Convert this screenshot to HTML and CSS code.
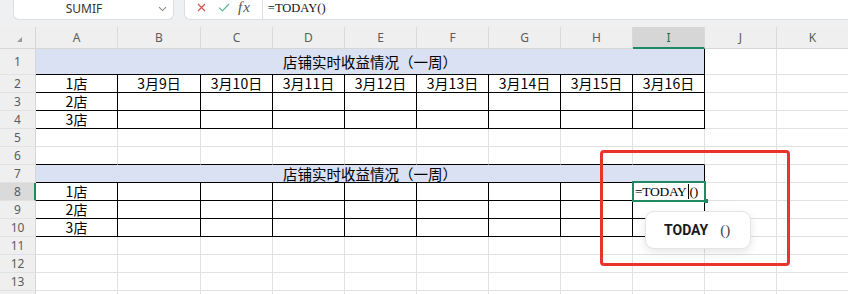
FILE: index.html
```html
<!DOCTYPE html>
<html lang="zh-CN">
<head>
<meta charset="utf-8">
<title>Sheet</title>
<link rel="stylesheet" href="styles.css">
</head>
<body>
<div class="topbar">
  <div class="namebox">
    <span class="nb-text">SUMIF</span>
    <svg class="chev" width="9" height="6" viewBox="0 0 9 6"><path d="M1 1.2 L4.5 4.6 L8 1.2" fill="none" stroke="#8a8a8a" stroke-width="1.1"/></svg>
  </div>
  <div class="fbox">
    <svg class="ic-x" width="9" height="9" viewBox="0 0 9 9"><path d="M1 1 L8 8 M8 1 L1 8" stroke="#d6534d" stroke-width="1.2" fill="none"/></svg>
    <svg class="ic-ok" width="12" height="9" viewBox="0 0 12 9"><path d="M1 4.6 L4.4 8 L11 1" stroke="#5db792" stroke-width="1.2" fill="none"/></svg>
    <span class="fx">fx</span>
    <span class="fdiv"></span>
    <span class="ftext">=TODAY()</span>
  </div>
</div>
<div class="sheet">
  <div class="corner"><svg width="5" height="5" viewBox="0 0 5 5"><polygon points="5,0 5,5 0,5" fill="#9c9c9c"/></svg></div>
  <div class="ch">A</div><div class="ch">B</div><div class="ch">C</div><div class="ch">D</div><div class="ch">E</div><div class="ch">F</div><div class="ch">G</div><div class="ch">H</div><div class="ch sel">I</div><div class="ch">J</div><div class="ch">K</div>

  <div class="rh tall">1</div><div class="cell title tall">店铺实时收益情况（一周）</div><div class="cell"></div><div class="cell"></div>

  <div class="rh">2</div><div class="cell b">1店</div><div class="cell b">3月9日</div><div class="cell b">3月10日</div><div class="cell b">3月11日</div><div class="cell b">3月12日</div><div class="cell b">3月13日</div><div class="cell b">3月14日</div><div class="cell b">3月15日</div><div class="cell b">3月16日</div><div class="cell"></div><div class="cell"></div>

  <div class="rh">3</div><div class="cell b">2店</div><div class="cell b"></div><div class="cell b"></div><div class="cell b"></div><div class="cell b"></div><div class="cell b"></div><div class="cell b"></div><div class="cell b"></div><div class="cell b"></div><div class="cell"></div><div class="cell"></div>

  <div class="rh">4</div><div class="cell b">3店</div><div class="cell b"></div><div class="cell b"></div><div class="cell b"></div><div class="cell b"></div><div class="cell b"></div><div class="cell b"></div><div class="cell b"></div><div class="cell b"></div><div class="cell"></div><div class="cell"></div>

  <div class="rh">5</div><div class="cell"></div><div class="cell"></div><div class="cell"></div><div class="cell"></div><div class="cell"></div><div class="cell"></div><div class="cell"></div><div class="cell"></div><div class="cell"></div><div class="cell"></div><div class="cell"></div>

  <div class="rh">6</div><div class="cell bb"></div><div class="cell bb"></div><div class="cell bb"></div><div class="cell bb"></div><div class="cell bb"></div><div class="cell bb"></div><div class="cell bb"></div><div class="cell bb"></div><div class="cell bb"></div><div class="cell"></div><div class="cell"></div>

  <div class="rh">7</div><div class="cell title">店铺实时收益情况（一周）</div><div class="cell"></div><div class="cell"></div>

  <div class="rh sel">8</div><div class="cell b">1店</div><div class="cell b"></div><div class="cell b"></div><div class="cell b"></div><div class="cell b"></div><div class="cell b"></div><div class="cell b"></div><div class="cell b"></div><div class="cell b active">=TODAY<span class="caret"></span>()</div><div class="cell"></div><div class="cell"></div>

  <div class="rh">9</div><div class="cell b">2店</div><div class="cell b"></div><div class="cell b"></div><div class="cell b"></div><div class="cell b"></div><div class="cell b"></div><div class="cell b"></div><div class="cell b"></div><div class="cell b"></div><div class="cell"></div><div class="cell"></div>

  <div class="rh">10</div><div class="cell b">3店</div><div class="cell b"></div><div class="cell b"></div><div class="cell b"></div><div class="cell b"></div><div class="cell b"></div><div class="cell b"></div><div class="cell b"></div><div class="cell b"></div><div class="cell"></div><div class="cell"></div>

  <div class="rh">11</div><div class="cell"></div><div class="cell"></div><div class="cell"></div><div class="cell"></div><div class="cell"></div><div class="cell"></div><div class="cell"></div><div class="cell"></div><div class="cell"></div><div class="cell"></div><div class="cell"></div>

  <div class="rh">12</div><div class="cell"></div><div class="cell"></div><div class="cell"></div><div class="cell"></div><div class="cell"></div><div class="cell"></div><div class="cell"></div><div class="cell"></div><div class="cell"></div><div class="cell"></div><div class="cell"></div>

  <div class="rh">13</div><div class="cell"></div><div class="cell"></div><div class="cell"></div><div class="cell"></div><div class="cell"></div><div class="cell"></div><div class="cell"></div><div class="cell"></div><div class="cell"></div><div class="cell"></div><div class="cell"></div>

  <div class="rh"></div><div class="cell"></div><div class="cell"></div><div class="cell"></div><div class="cell"></div><div class="cell"></div><div class="cell"></div><div class="cell"></div><div class="cell"></div><div class="cell"></div><div class="cell"></div><div class="cell"></div>

  <div class="callout"></div>
  <div class="tip"><b class="tip-name">TODAY</b><span class="tip-par">()</span></div>
</div>
</body>
</html>
```

FILE: styles.css
```css
html, body {
  margin: 0;
  padding: 0;
}
body {
  width: 848px;
  height: 294px;
  overflow: hidden;
  background: #fff;
  font-family: "Noto Sans", sans-serif;
}

/* formula bar */
.topbar {
  height: 27px;
  box-sizing: border-box;
  background: #eff0f2;
  display: flex;
  align-items: flex-start;
  padding-left: 13px;
}
.namebox {
  width: 161px;
  height: 20px;
  box-sizing: border-box;
  background: #fff;
  border: 1px solid #dcdee2;
  border-top: none;
  border-radius: 0 0 6px 6px;
  display: flex;
  align-items: center;
  padding-bottom: 2px;
}
.nb-text {
  flex: 1;
  text-align: center;
  font-size: 12px;
  line-height: 16px;
  color: #333;
  padding-right: 4px;
}
.chev {
  margin-right: 6px;
}
.fbox {
  flex: 1;
  margin-left: 10px;
  height: 20px;
  box-sizing: border-box;
  background: #fff;
  border: 1px solid #dcdee2;
  border-top: none;
  border-right: none;
  border-radius: 0 0 0 6px;
  display: flex;
  align-items: center;
  padding-left: 12px;
  padding-bottom: 4px;
}
.ic-x {
  margin-right: 12px;
}
.ic-ok {
  margin-right: 8px;
}
.fx {
  font-family: "Liberation Serif", serif;
  font-style: italic;
  font-size: 15px;
  line-height: 15px;
  color: #555;
  letter-spacing: 1px;
}
.fdiv {
  width: 1px;
  height: 19px;
  background: #e0e0e0;
  margin-left: 11px;
  margin-right: 5px;
  align-self: flex-start;
}
.ftext {
  font-family: "Liberation Serif", serif;
  font-size: 12.5px;
  line-height: 14px;
  color: #111;
}

/* sheet grid */
.sheet {
  position: relative;
  height: 267px;
  overflow: hidden;
  display: grid;
  grid-template-columns: 36px 82px 83px repeat(8, 72px) 72px;
  grid-template-rows: 22px 26px;
  grid-auto-rows: 18px;
}
.corner {
  background: #efefef;
  box-sizing: border-box;
  border-right: 1px solid #d6d6d6;
  border-bottom: 1px solid #d6d6d6;
  display: flex;
  align-items: flex-start;
  padding: 10px 0 0 17px;
}
.ch {
  background: #efefef;
  box-sizing: border-box;
  border-right: 1px solid #dadada;
  border-bottom: 1px solid #d6d6d6;
  font-size: 12px;
  line-height: 22px;
  color: #5c5c5c;
  text-align: center;
}
.ch.sel {
  background: #d6d6d6;
  color: #1d6e4c;
  border-bottom: 2px solid #1f8a62;
}
.rh {
  background: #efefef;
  box-sizing: border-box;
  border-right: 1px solid #d6d6d6;
  border-bottom: 1px solid #e2e2e2;
  font-size: 12px;
  line-height: 17px;
  color: #5c5c5c;
  text-align: center;
}
.rh.tall {
  line-height: 25px;
}
.rh.sel {
  background: #dadada;
  border-right: 2px solid #1f8a62;
  padding-left: 1px;
}
.cell {
  box-sizing: border-box;
  border-right: 1px solid #e1e1e1;
  border-bottom: 1px solid #e1e1e1;
  font-family: "Noto Sans CJK SC", sans-serif;
  font-size: 14px;
  line-height: 17px;
  color: #000;
  text-align: center;
  white-space: nowrap;
}
.cell.b {
  border-right-color: #000;
  border-bottom-color: #000;
}
.cell.bb {
  border-bottom-color: #000;
}
.title {
  grid-column: span 9;
  background: #d9e1f2;
  border-right-color: #000;
  border-bottom-color: #000;
  font-size: 14.5px;
}
.title.tall {
  line-height: 25px;
}
.active {
  position: relative;
  text-align: left;
  padding-left: 2px;
  font-family: "Liberation Serif", serif;
  font-size: 13.5px;
  letter-spacing: -0.3px;
}
.active::after {
  content: "";
  position: absolute;
  left: -1px;
  right: -2px;
  top: -2px;
  bottom: -2px;
  border: 2px solid #1f8a62;
}
.active::before {
  content: "";
  position: absolute;
  right: -4px;
  bottom: -3px;
  width: 4px;
  height: 4px;
  background: #1f8a62;
  z-index: 2;
}
.caret {
  display: inline-block;
  width: 1px;
  height: 15px;
  background: #000;
  vertical-align: -3px;
  margin: 0 1px;
}

/* overlays */
.callout {
  position: absolute;
  left: 600px;
  top: 123px;
  width: 190px;
  height: 116px;
  box-sizing: border-box;
  border: 3px solid #e8342b;
  border-radius: 4px;
}
.tip {
  position: absolute;
  left: 645px;
  top: 184px;
  width: 106px;
  height: 38px;
  box-sizing: border-box;
  background: #fff;
  border: 1px solid #e4e4e4;
  border-radius: 9px;
  box-shadow: 0 3px 10px rgba(0, 0, 0, 0.10);
  display: flex;
  align-items: center;
  padding-left: 18px;
}
.tip-name {
  font-family: Roboto, "Noto Sans", sans-serif;
  font-weight: 700;
  font-size: 14px;
  color: #1a1a1a;
}
.tip-par {
  margin-left: 12px;
  font-family: "Liberation Serif", serif;
  font-size: 15px;
  color: #444;
}
```
